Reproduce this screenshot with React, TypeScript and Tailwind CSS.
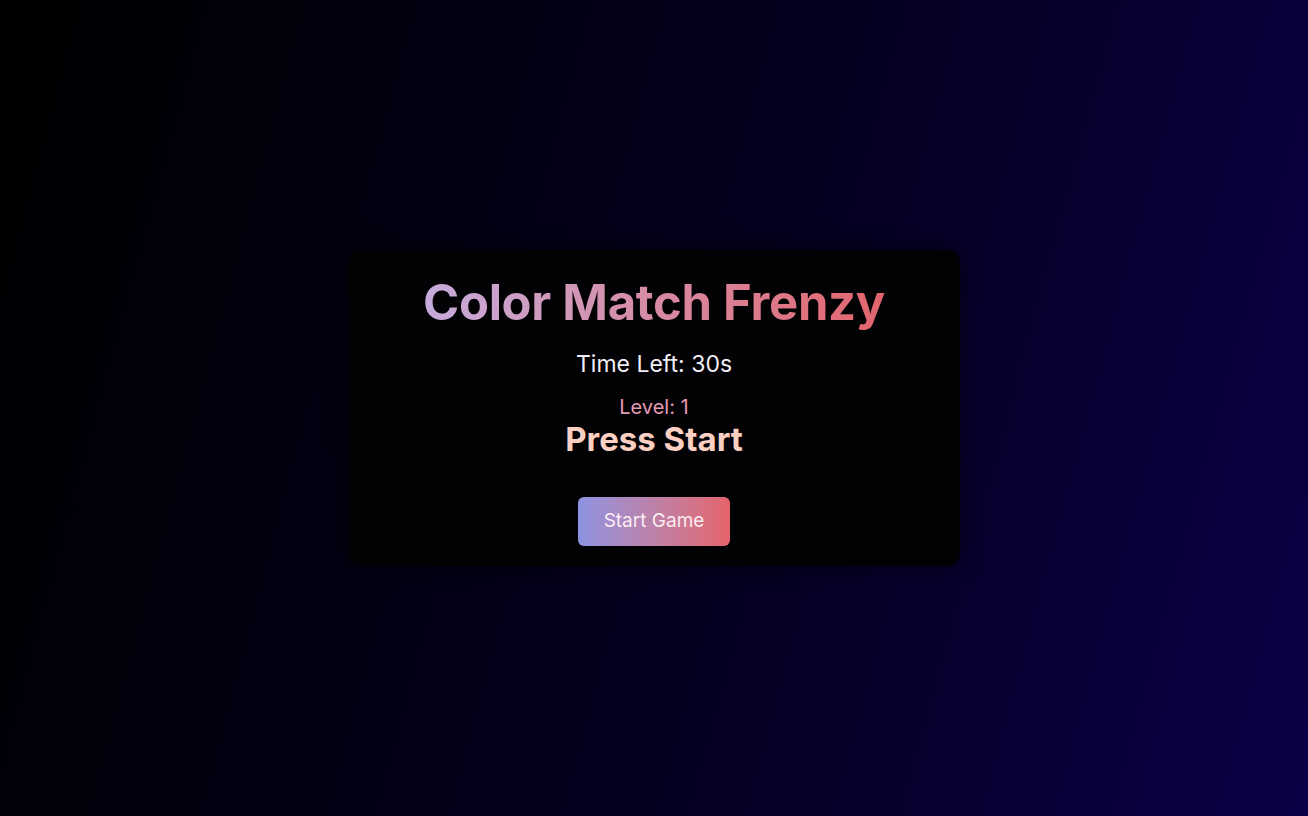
import React from "react";

export default function App() {
  return (
    <div
      className="min-h-screen w-full flex items-center justify-center bg-[linear-gradient(105deg,#000000_0%,#04001f_55%,#0a0046_100%)]"
      style={{ fontFamily: "Inter, 'Noto Sans', sans-serif" }}
    >
      <div className="w-[612px] h-[316px] rounded-xl bg-[#020104] shadow-[0_0_24px_rgba(0,0,0,0.6)] flex flex-col items-center pt-[22px]">
        <h1 className="text-[49px] leading-[62px] font-bold tracking-[-0.3px] bg-gradient-to-r from-[#c5abdc] to-[#e2646c] bg-clip-text text-transparent">
          Color Match Frenzy
        </h1>
        <p className="mt-[16px] text-[23px] leading-7 text-[#f1eef6]">Time Left: 30s</p>
        <p className="mt-[17px] text-[20px] leading-6 text-[#e59ab5]">Level: 1</p>
        <p className="mt-[2px] text-[33px] leading-9 font-bold text-[#fbd0c2]">Press Start</p>
        <button className="mt-[40px] w-[152px] h-[49px] rounded-md bg-gradient-to-r from-[#8d93e2] to-[#e4636a] text-[19px] text-[#fbecf2]">
          Start Game
        </button>
      </div>
    </div>
  );
}
